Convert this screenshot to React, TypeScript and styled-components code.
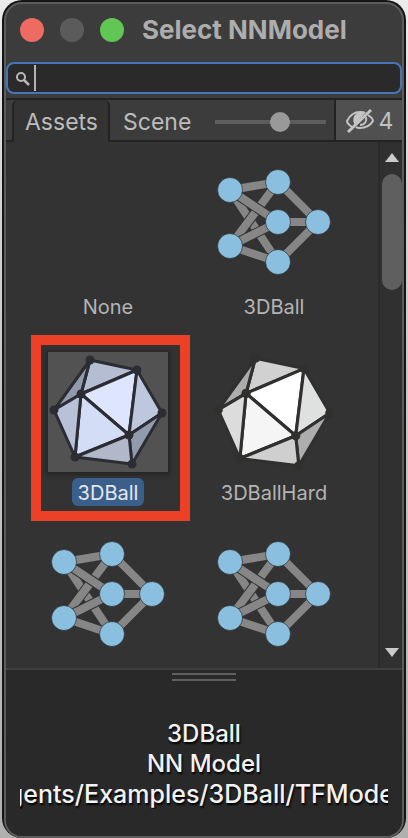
import React, { useState } from "react";
import styled, { createGlobalStyle, css } from "styled-components";

const GlobalStyle = createGlobalStyle`
  *, *::before, *::after { box-sizing: border-box; }
  body {
    margin: 0;
    background: linear-gradient(180deg, #ececec 0%, #d2d2d2 25%, #b0b0ae 100%);
    font-family: Inter, "Liberation Sans", sans-serif;
    color: #bdbdbd;
  }
  button, input { font: inherit; color: inherit; }
  button { border: 0; padding: 0; background: none; cursor: pointer; }
`;

const Page = styled.main`
  height: 100vh;
  padding: 0 2px;
  display: flex;
  background: linear-gradient(#0c0c0c, #0c0c0c) center top / calc(100% - 44px) 8px no-repeat;
`;

const Window = styled.section`
  flex: 1;
  min-width: 0;
  display: flex;
  border: 2px solid #151515;
  border-bottom: 0;
  border-radius: 20px;
  background: #151515;
`;

const Frame = styled.div`
  flex: 1;
  min-width: 0;
  display: flex;
  flex-direction: column;
  overflow: hidden;
  border: 2px solid #5c5c5c;
  border-radius: 18px;
  background: #3c3c3c;
`;

const TitleBar = styled.header`
  flex: none;
  height: 58px;
  padding: 0 14px 6px;
  display: flex;
  align-items: center;
  gap: 16px;
`;

const Light = styled.button<{ $color: string }>`
  flex: none;
  width: 24px;
  height: 24px;
  border-radius: 50%;
  background: ${(p) => p.$color};
`;

const Title = styled.h1`
  margin: 0 0 0 2px;
  font-size: 26px;
  line-height: 30px;
  font-weight: 700;
  color: #adadad;
  white-space: nowrap;
`;

const Search = styled.label`
  flex: none;
  height: 32px;
  margin-bottom: 4px;
  padding: 0 8px 0 7px;
  display: flex;
  align-items: center;
  border: 2px solid #4675b8;
  border-radius: 8px;
  background: #2a2a2a;
`;

const Caret = styled.span`
  flex: none;
  width: 2px;
  height: 26px;
  margin-left: 3px;
  background: #b4b4b4;
`;

const SearchInput = styled.input`
  flex: 1;
  min-width: 0;
  border: 0;
  outline: 0;
  background: none;
  caret-color: transparent;
  font-size: 20px;
`;

const Toolbar = styled.div`
  flex: none;
  height: 44px;
  display: flex;
  padding-left: 6px;
  border-top: 2px solid #232323;
  box-shadow: inset 0 -2px #232323;
`;

const Tab = styled.button<{ $active?: boolean }>`
  flex: none;
  height: 42px;
  padding: 2px 10px 0 11px;
  border: 2px solid transparent;
  border-width: 0 2px;
  font-size: 23px;
  line-height: 40px;
  color: #bcbcbc;
  ${(p) =>
    p.$active &&
    css`
      border-color: #232323;
      border-radius: 6px 6px 0 0;
      background: #333;
    `}
`;

const SizeSlider = styled.input`
  appearance: none;
  flex: 1;
  min-width: 40px;
  height: 20px;
  margin: 12px 8px 0 12px;
  background: linear-gradient(#5e5e5e, #5e5e5e) center / 100% 4px no-repeat;
  &::-webkit-slider-thumb {
    appearance: none;
    width: 20px;
    height: 20px;
    border-radius: 50%;
    background: #999;
  }
`;

const HiddenToggle = styled.button`
  flex: none;
  width: 68px;
  height: 42px;
  padding-top: 2px;
  display: flex;
  align-items: center;
  justify-content: center;
  gap: 4px;
  border-left: 2px solid #232323;
  border-bottom: 2px solid #232323;
  background: #505050;
  color: #c0c0c0;
  font-size: 23px;
`;

const Browser = styled.div`
  flex: 1;
  min-height: 0;
  display: flex;
`;

const Grid = styled.div`
  flex: 1;
  min-width: 0;
  overflow: hidden;
  padding: 7px 0 0 19px;
  display: grid;
  grid-template-columns: repeat(auto-fill, 166px);
  grid-auto-rows: 186px;
  background: #333;
`;

const Cell = styled.button<{ $marked?: boolean }>`
  position: relative;
  padding-top: 17px;
  display: flex;
  flex-direction: column;
  align-items: center;
  gap: 6px;
  ${(p) =>
    p.$marked &&
    css`
      &::after {
        content: "";
        position: absolute;
        inset: 0 1px 0 6px;
        border: 10px solid #ec4126;
      }
    `}
`;

const Thumb = styled.span<{ $selected?: boolean }>`
  width: 120px;
  height: 120px;
  flex: none;
  ${(p) =>
    p.$selected &&
    css`
      background: #525252;
      box-shadow: 0 1px 4px 2px #262626;
    `}
  svg { display: block; }
`;

const Name = styled.span<{ $selected?: boolean }>`
  padding: 2px 6px 0;
  border-radius: 6px;
  font-size: 20px;
  line-height: 26px;
  color: ${(p) => (p.$selected ? "#e4e8ee" : "#b4b4b4")};
  background: ${(p) => (p.$selected ? "#3a5f8a" : "none")};
`;

const Scrollbar = styled.div`
  flex: none;
  width: 24px;
  padding: 11px 0;
  display: flex;
  flex-direction: column;
  align-items: flex-end;
  justify-content: space-between;
  border-left: 2px solid #2b2b2b;
  background: #303030;
`;

const ScrollArrow = styled.button`
  width: 20px;
  height: 10px;
  display: flex;
  justify-content: center;
  align-items: center;
`;

const ScrollTrack = styled.div`
  flex: 1;
  margin: 11px 0;
`;

const ScrollThumb = styled.div`
  width: 20px;
  height: 116px;
  border-radius: 10px;
  background: #5f5f5f;
`;

const Preview = styled.footer`
  flex: none;
  height: 168px;
  padding: 3px 14px 0;
  display: flex;
  flex-direction: column;
  align-items: center;
  border-top: 2px solid #404040;
  background: #292929;
`;

const Grip = styled.div`
  flex: none;
  width: 64px;
  height: 8px;
  margin-bottom: 38px;
  border: 2px solid #606060;
  border-width: 2px 0;
`;

const PreviewLine = styled.p<{ $path?: boolean }>`
  width: 100%;
  margin: 0;
  display: flex;
  justify-content: center;
  overflow: hidden;
  white-space: nowrap;
  font-size: ${(p) => (p.$path ? 25 : 24)}px;
  line-height: 30px;
  font-weight: 500;
  color: #f2f2f2;
  text-shadow: 1px 2px 2px #000;
`;

const nodes = [[16, 24], [16, 80], [64, 16], [64, 56], [64, 96], [104, 56]];
const links = [[0, 4], [1, 2], [0, 3], [1, 3], [0, 2], [1, 4], [2, 5], [3, 5], [4, 5]];

function NetworkIcon() {
  return (
    <svg width="120" height="120" viewBox="0 0 120 120" aria-hidden="true">
      {links.map(([a, b]) => (
        <g key={`${a}-${b}`}>
          {["#333", "#868686"].map((stroke, i) => (
            <line
              key={stroke}
              x1={nodes[a][0]}
              y1={nodes[a][1]}
              x2={nodes[b][0]}
              y2={nodes[b][1]}
              stroke={stroke}
              strokeWidth={i ? 8 : 10}
            />
          ))}
        </g>
      ))}
      {nodes.map(([x, y]) => (
        <circle key={`${x}-${y}`} cx={x} cy={y} r="12.5" fill="#8bbfe0" stroke="#2a2a2a" strokeOpacity="0.7" />
      ))}
    </svg>
  );
}

const faces = ["42,8 89,18 33,42", "42,8 33,42 6,58", "33,42 89,18 81,83", "33,42 81,83 27,105", "6,58 33,42 27,105", "89,18 114,61 81,83", "114,61 84,112 81,83", "27,105 81,83 84,112"];
const corners = [[42, 8], [89, 18], [114, 61], [84, 112], [27, 105], [6, 58], [33, 42], [81, 83]];
const palettes = {
  blue: ["#b4bdd1", "#929bad", "#dde5ff", "#d3ddf6", "#b7c1d7", "#bdc8de", "#929bad", "#b0b8ca"],
  white: ["#d1d1d1", "#acacac", "#ffffff", "#f5f5f5", "#dcdcdc", "#dfe1e0", "#adadad", "#cfcfcf"],
};

function SolidIcon({ tone }: { tone: keyof typeof palettes }) {
  const edge = tone === "blue" ? "#2b2d33" : "#30302f";
  const viewBox = tone === "blue" ? "0 0 120 120" : "2 2 116 116";
  return (
    <svg width="120" height="120" viewBox={viewBox} aria-hidden="true">
      {faces.map((points, i) => (
        <polygon key={points} points={points} fill={palettes[tone][i]} stroke={edge} strokeWidth="3" strokeLinejoin="round" />
      ))}
      {corners.map(([x, y]) => (
        <circle key={`${x}-${y}`} cx={x} cy={y} r="4.5" fill={edge} />
      ))}
    </svg>
  );
}

function SearchIcon() {
  return (
    <svg width="16" height="16" viewBox="0 0 16 16" fill="none" stroke="#b8b8b8" aria-hidden="true">
      <circle cx="6" cy="7" r="4" strokeWidth="2" />
      <path d="M9 10l5 5" strokeWidth="2.5" />
    </svg>
  );
}

function HiddenEyeIcon() {
  return (
    <svg width="30" height="26" viewBox="0 0 30 26" fill="none" stroke="#c4c4c4" strokeWidth="2" aria-hidden="true">
      <path d="M7 19C4 17 2 15 2 13C5 7 10 4 15 4C17 4 19 4 20 5" />
      <path d="M23 7C26 9 28 11 28 13C25 18 20 20 15 20C13 20 12 20 11 19" />
      <path d="M10 17C7 13 8 8 12 5L20 5Z" fill="#c4c4c4" stroke="none" />
      <path d="M21 9C22 13 20 17 15 17" />
      <path d="M3 24L26 2" strokeWidth="3" />
    </svg>
  );
}

const assets = [
  { name: "None", kind: "empty" },
  { name: "3DBall", kind: "network" },
  { name: "3DBall", kind: "blue" },
  { name: "3DBallHard", kind: "white" },
  { name: "", kind: "network" },
  { name: "", kind: "network" },
];

export default function App() {
  const [selected, setSelected] = useState(2);
  const [tab, setTab] = useState("Assets");
  return (
    <>
      <GlobalStyle />
      <Page>
        <Window>
          <Frame>
            <TitleBar>
              <Light $color="#ed6b60" aria-label="Close" />
              <Light $color="#5b5b5b" aria-label="Minimize" />
              <Light $color="#62c655" aria-label="Zoom" />
              <Title>Select NNModel</Title>
            </TitleBar>
            <Search>
              <SearchIcon />
              <Caret />
              <SearchInput type="text" aria-label="Search" />
            </Search>
            <Toolbar>
              {["Assets", "Scene"].map((t) => (
                <Tab key={t} $active={tab === t} aria-pressed={tab === t} onClick={() => setTab(t)}>
                  {t}
                </Tab>
              ))}
              <SizeSlider type="range" min="0" max="100" defaultValue="60" aria-label="Icon size" />
              <HiddenToggle aria-label="Hidden packages: 4">
                <HiddenEyeIcon />4
              </HiddenToggle>
            </Toolbar>
            <Browser>
              <Grid>
                {assets.map((a, i) => (
                  <Cell key={i} $marked={i === 2} aria-label={a.name || "NN Model"} onClick={() => setSelected(i)}>
                    <Thumb $selected={selected === i}>
                      {a.kind === "network" && <NetworkIcon />}
                      {(a.kind === "blue" || a.kind === "white") && <SolidIcon tone={a.kind} />}
                    </Thumb>
                    {a.name && <Name $selected={selected === i}>{a.name}</Name>}
                  </Cell>
                ))}
              </Grid>
              <Scrollbar>
                <ScrollArrow aria-label="Scroll up">
                  <svg width="16" height="10" viewBox="0 0 16 10"><path d="M8 0L15 9H1Z" fill="#cacaca" /></svg>
                </ScrollArrow>
                <ScrollTrack>
                  <ScrollThumb />
                </ScrollTrack>
                <ScrollArrow aria-label="Scroll down">
                  <svg width="16" height="10" viewBox="0 0 16 10"><path d="M8 10L15 1H1Z" fill="#cacaca" /></svg>
                </ScrollArrow>
              </Scrollbar>
            </Browser>
            <Preview>
              <Grip />
              <PreviewLine>3DBall</PreviewLine>
              <PreviewLine>NN Model</PreviewLine>
              <PreviewLine $path>gents/Examples/3DBall/TFModel</PreviewLine>
            </Preview>
          </Frame>
        </Window>
      </Page>
    </>
  );
}
